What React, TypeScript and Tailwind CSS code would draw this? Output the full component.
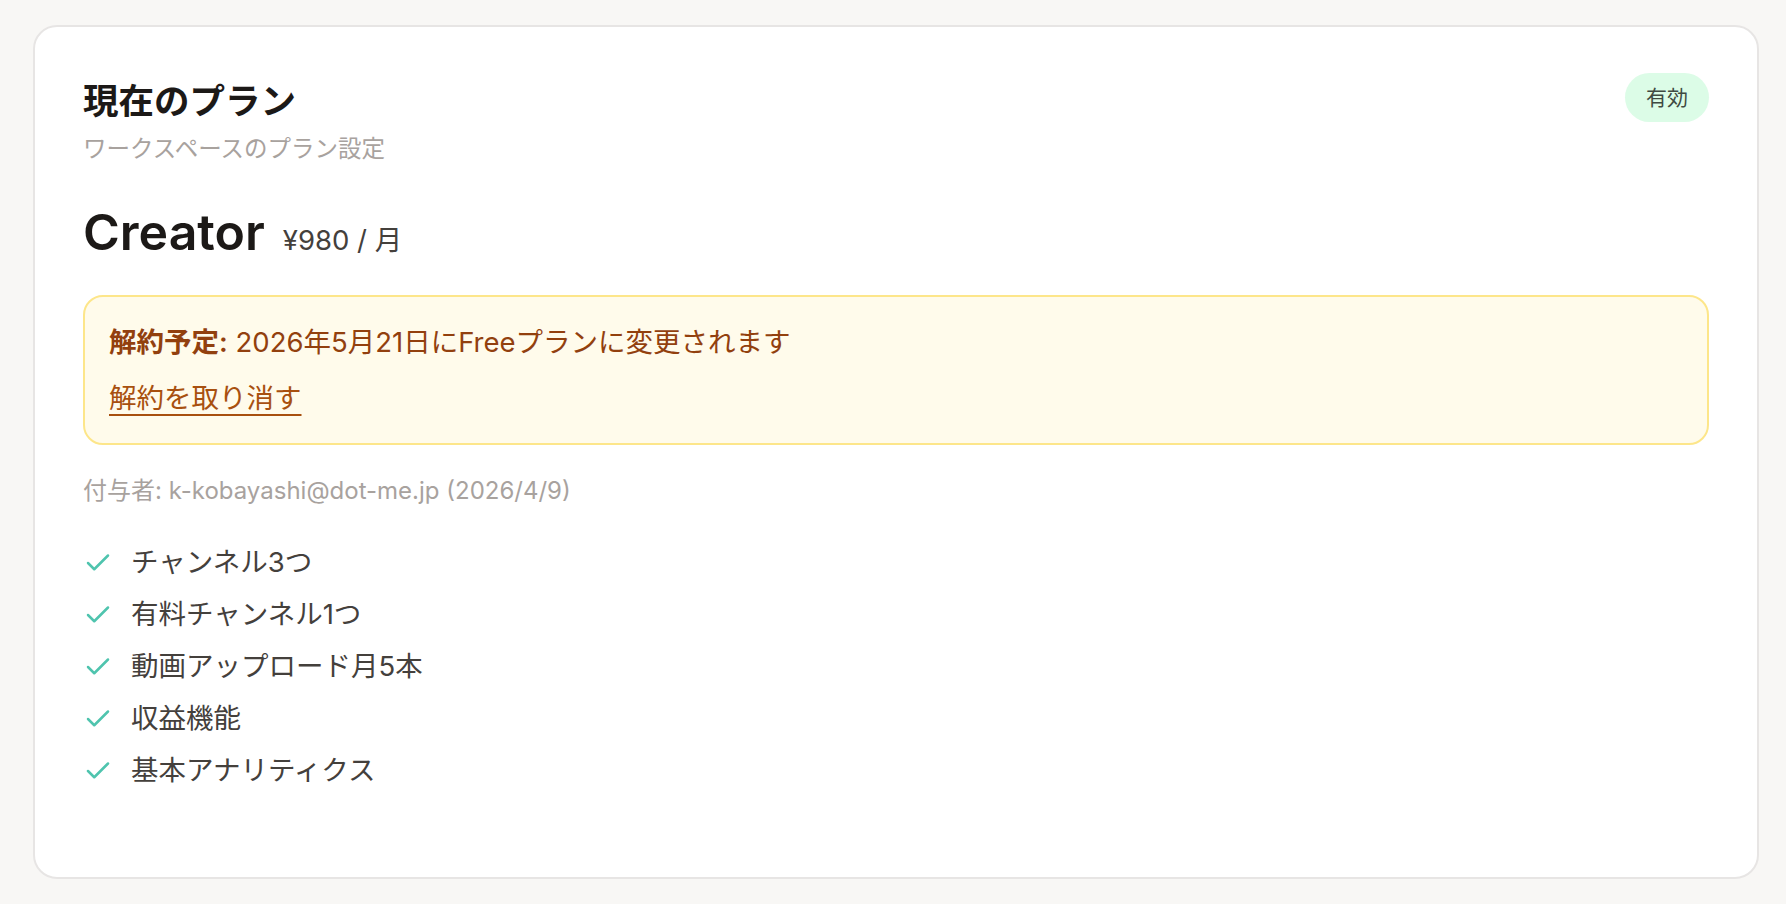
import { Check } from 'lucide-react';

const features = [
  'チャンネル3つ',
  '有料チャンネル1つ',
  '動画アップロード月5本',
  '収益機能',
  '基本アナリティクス',
];

const App = () => {
  return (
    <div
      className="min-h-screen bg-[#f8f7f5] pl-[33px] pr-[27px] pt-[25px] pb-[25px]"
      style={{ fontFamily: 'Inter, "Noto Sans CJK JP", sans-serif' }}
    >
      <div className="rounded-[24px] border-2 border-[#e7e5e4] bg-white px-12 pt-[46px] pb-[80px]">
        {/* Header */}
        <div className="flex items-start justify-between">
          <div>
            <h1 className="text-[35.5px] font-bold leading-[58px] text-[#1c1917]">現在のプラン</h1>
            <p className="text-[23.5px] leading-[36px] text-[#a8a29e]">ワークスペースのプラン設定</p>
          </div>
          <span className="flex h-[49px] w-[84px] items-center justify-center rounded-full bg-[#dcfce7] text-[21px] text-[#3f4a42]">
            有効
          </span>
        </div>

        {/* Plan name */}
        <div className="mt-[35px] flex items-baseline gap-[18px]">
          <span className="text-[50px] font-semibold leading-[60px] text-[#1c1917]">Creator</span>
          <span className="text-[27.5px] text-[#44403c]">¥980 / 月</span>
        </div>

        {/* Cancellation notice */}
        <div className="mt-[33px] rounded-[20px] border-2 border-[#fde68a] bg-[#fffbeb] px-6 py-[27px]">
          <p className="text-[27.5px] leading-[36px] text-[#92400e]">
            <span className="font-semibold">解約予定:</span> 2026年5月21日にFreeプランに変更されます
          </p>
          <a
            href="#"
            className="mt-5 inline-block text-[27.5px] leading-[36px] text-[#a8500f] underline decoration-2 underline-offset-[6px]"
          >
            解約を取り消す
          </a>
        </div>

        {/* Granted by */}
        <p className="mt-[29px] text-[24px] leading-[34px] text-[#a8a29e]">
          付与者: k-kobayashi@dot-me.jp (2026/4/9)
        </p>

        {/* Features */}
        <ul className="mt-[29px]">
          {features.map((f) => (
            <li key={f} className="flex h-[52px] items-center gap-[18px]">
              <Check size={30} strokeWidth={2} className="shrink-0 text-[#4fc4ae]" />
              <span className="text-[27.5px] text-[#44403c]">{f}</span>
            </li>
          ))}
        </ul>
      </div>
    </div>
  );
};

export default App;
